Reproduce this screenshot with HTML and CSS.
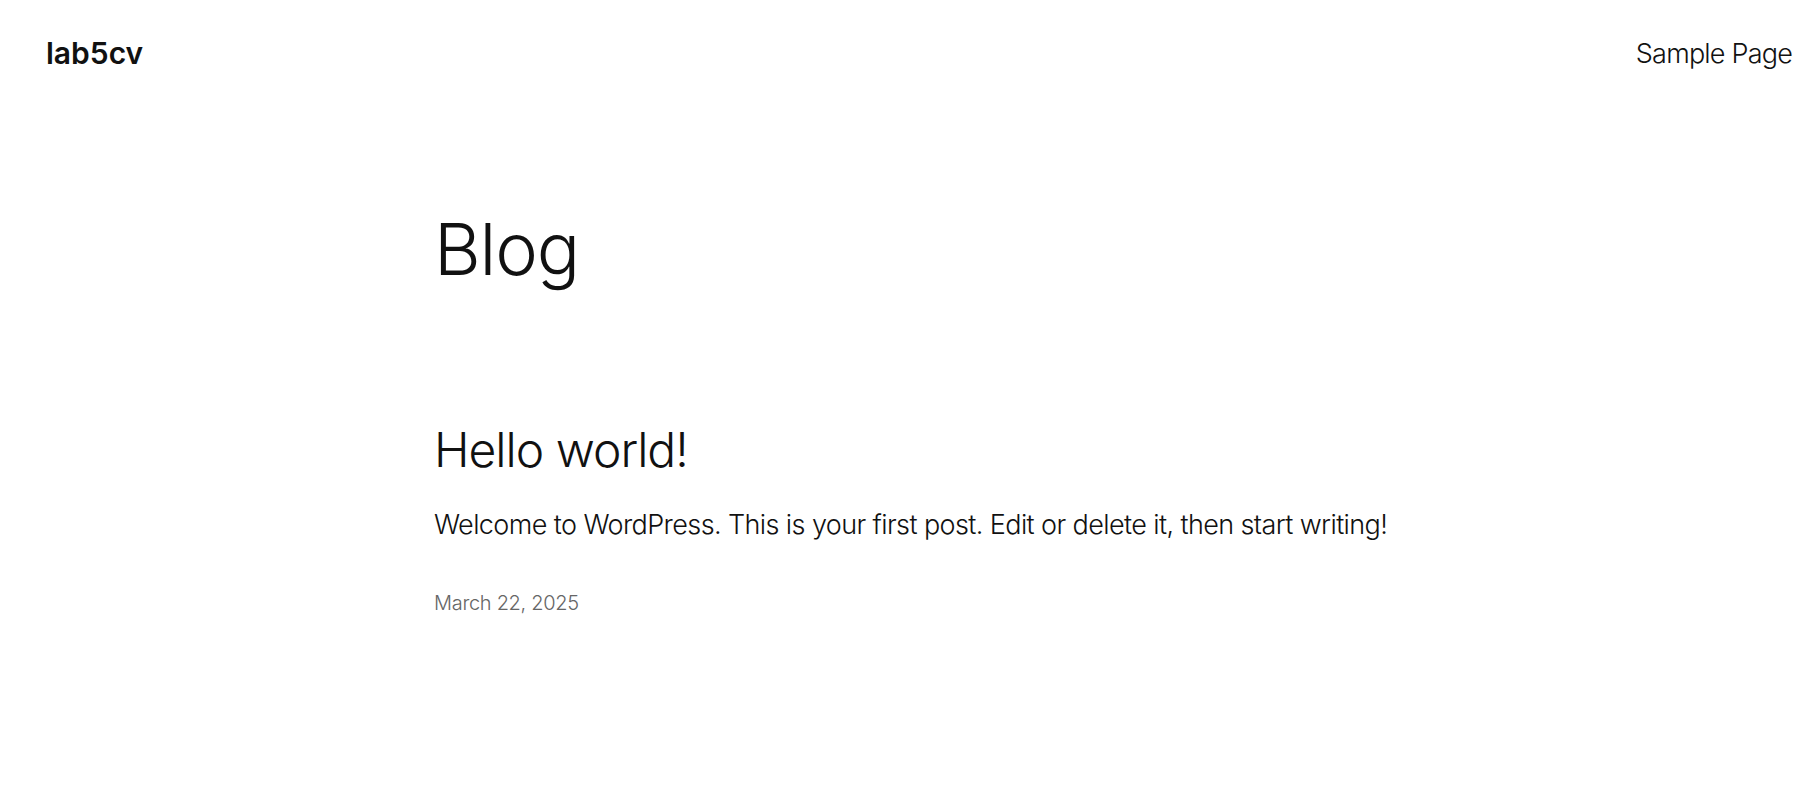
FILE: index.html
```html
<!DOCTYPE html>
<html lang="en">
<head>
<meta charset="utf-8">
<title>Blog – lab5cv</title>
<link rel="stylesheet" href="styles.css">
</head>
<body>
<header class="site-header">
  <a class="site-title" href="#">lab5cv</a>
  <nav class="site-nav"><a href="#">Sample Page</a></nav>
</header>
<main class="site-main">
  <h1 class="page-title">Blog</h1>
  <article class="post">
    <h2 class="post-title">Hello world!</h2>
    <p class="post-excerpt">Welcome to WordPress. This is your first post. Edit or delete it, then start writing!</p>
    <div class="post-date">March 22, 2025</div>
  </article>
</main>
</body>
</html>
```
FILE: styles.css
```css
html, body {
  margin: 0;
  padding: 0;
  background: #fff;
  color: #111;
  font-family: Inter, "Noto Sans", sans-serif;
}
a { color: inherit; text-decoration: none; }

.site-header {
  display: flex;
  justify-content: space-between;
  align-items: center;
  height: 106px;
  padding: 0 7px 0 46px;
}
.site-title {
  font-size: 30px;
  font-weight: 600;
  letter-spacing: 0;
}
.site-nav {
  font-size: 27px;
  font-weight: 300;
  letter-spacing: -0.8px;
}

.site-main {
  padding-left: 434px;
}
.page-title {
  margin: 0;
  padding-top: 100px;
  font-size: 72px;
  font-weight: 300;
  line-height: 1.2;
  letter-spacing: -1.2px;
}
.post {
  padding-top: 129px;
}
.post-title {
  margin: 0;
  font-size: 48px;
  font-weight: 300;
  line-height: 1.2;
  letter-spacing: -1px;
}
.post-excerpt {
  margin: 27px 0 0;
  font-size: 27px;
  font-weight: 300;
  line-height: 1.4;
  letter-spacing: -0.6px;
}
.post-date {
  margin-top: 47px;
  font-size: 20px;
  font-weight: 300;
  color: #666;
  letter-spacing: -0.3px;
}
```
